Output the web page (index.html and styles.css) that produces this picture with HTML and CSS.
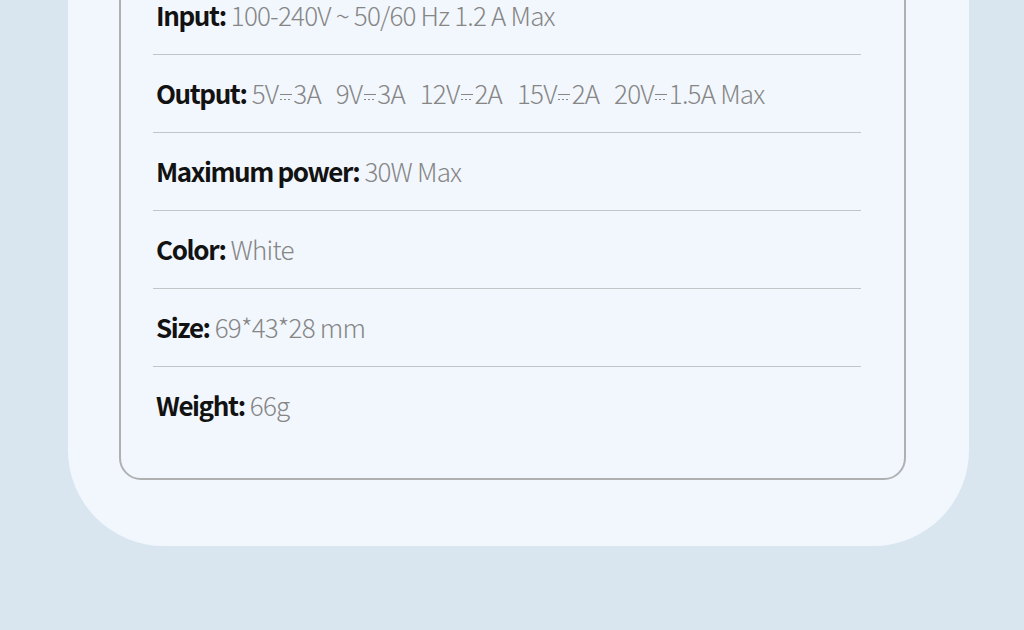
FILE: index.html
```html
<!DOCTYPE html>
<html lang="en">
<head>
    <meta charset="UTF-8">
    <meta name="viewport" content="width=device-width, initial-scale=1.0">
    <title>Specifications</title>
    <link rel="stylesheet" href="styles.css">
</head>
<body>

<div class="card">
    <div class="specs">
        <div class="spec-row"><b>Input:</b> <span class="value">100-240V ~ 50/60 Hz 1.2 A Max</span></div>
        <div class="spec-row"><b>Output:</b> <span class="value">5V<i class="dc"></i>3A&nbsp;&nbsp; 9V<i class="dc"></i>3A&nbsp;&nbsp; 12V<i class="dc"></i>2A&nbsp;&nbsp; 15V<i class="dc"></i>2A&nbsp;&nbsp; 20V<i class="dc"></i>1.5A Max</span></div>
        <div class="spec-row"><b>Maximum power:</b> <span class="value">30W Max</span></div>
        <div class="spec-row"><b>Color:</b> <span class="value">White</span></div>
        <div class="spec-row"><b>Size:</b> <span class="value">69*43*28 mm</span></div>
        <div class="spec-row"><b>Weight:</b> <span class="value">66g</span></div>
    </div>
</div>

</body>
</html>
```

FILE: styles.css
```css
body {
    margin: 0;
    padding: 0;
    background-color: #d9e6f0;
    font-family: "Noto Sans CJK SC", "Noto Sans", sans-serif;
    overflow: hidden;
}
.card {
    width: 901px;
    margin: -100px 0 0 68px;
    padding: 0 63px 66px 51px;
    box-sizing: border-box;
    background: #f2f7fd;
    border-radius: 0 0 96px 96px;
}
.specs {
    border: 2px solid #aeb0b2;
    border-radius: 0 0 22px 22px;
    padding: 75px 43px 34px 32px;
}
.spec-row {
    font-size: 26px;
    line-height: 36px;
    padding: 20px 0 21px 3px;
    border-bottom: 1.5px solid #c2c5c8;
    color: #121212;
    letter-spacing: -0.8px;
    white-space: nowrap;
}
.spec-row:last-child {
    border-bottom: none;
}
.spec-row b {
    font-weight: 700;
    letter-spacing: -1.4px;
}
.value {
    color: #868686;
    font-weight: 300;
}
.dc {
    display: inline-block;
    width: 12px;
    height: 5px;
    margin: 0 1.5px 4px;
    border-top: 1.5px solid #868686;
    background: repeating-linear-gradient(90deg, #868686 0 2px, transparent 2px 4px) bottom / 100% 1.5px no-repeat;
    vertical-align: baseline;
}
```
